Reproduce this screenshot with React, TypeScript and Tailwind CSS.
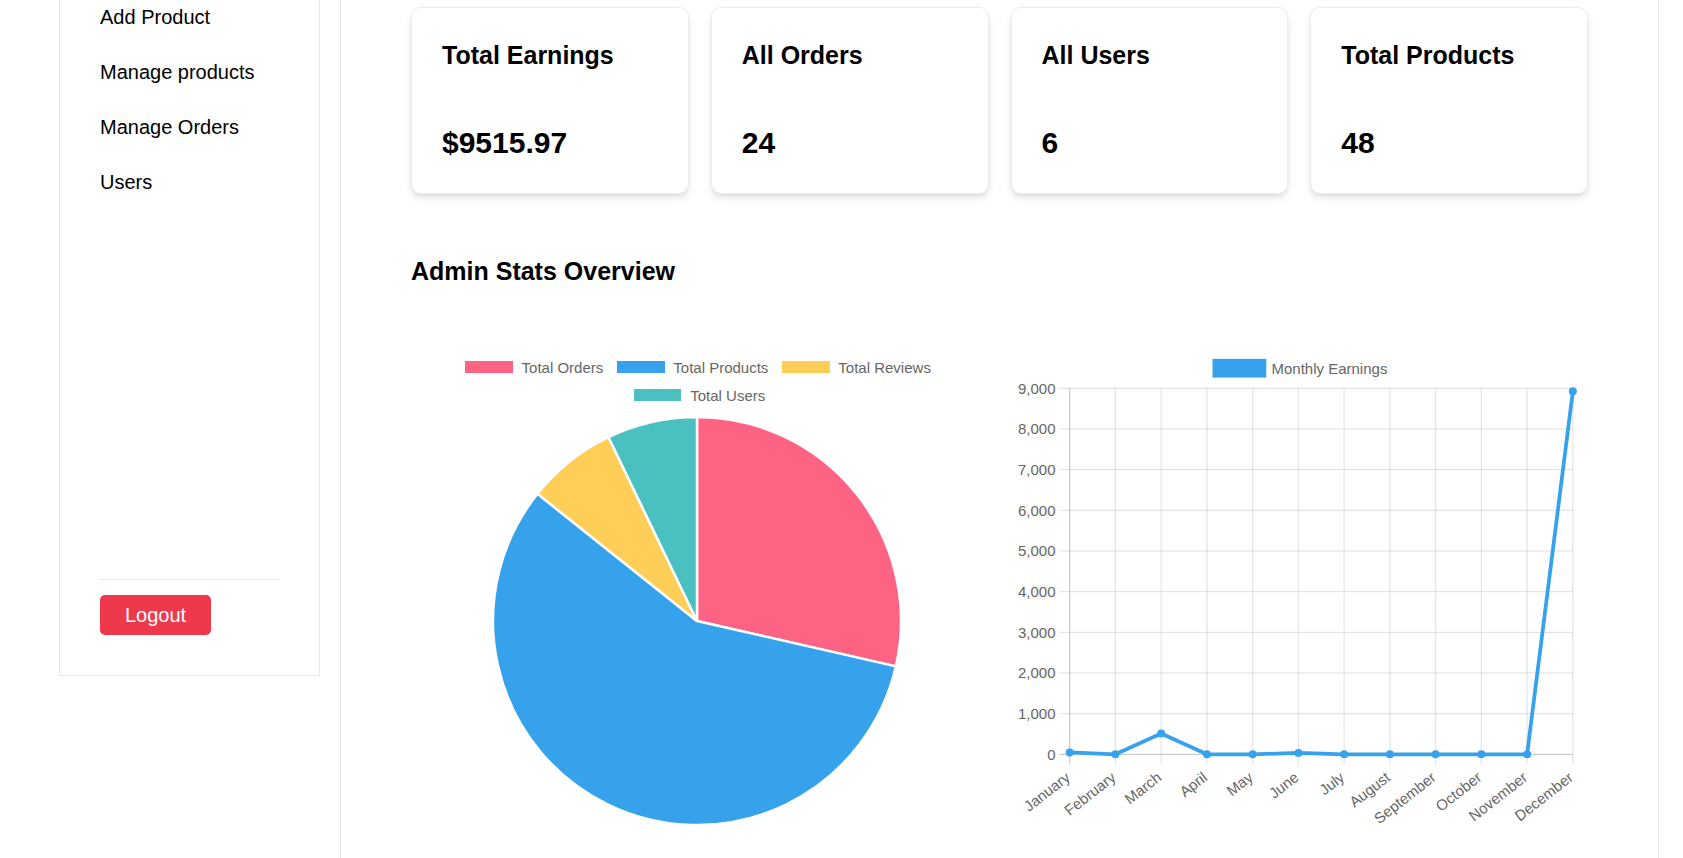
const navItems = ["Add Product", "Manage products", "Manage Orders", "Users"];

const stats = [
  { title: "Total Earnings", value: "$9515.97" },
  { title: "All Orders", value: "24" },
  { title: "All Users", value: "6" },
  { title: "Total Products", value: "48" },
];

const pieData = [
  { label: "Total Orders", value: 24, color: "#FF6384" },
  { label: "Total Products", value: 48, color: "#36A2EB" },
  { label: "Total Reviews", value: 6, color: "#FFCE56" },
  { label: "Total Users", value: 6, color: "#4BC0C0" },
];

const months = [
  "January", "February", "March", "April", "May", "June",
  "July", "August", "September", "October", "November", "December",
];
const earnings = [45, 0, 510, 0, 0, 35, 0, 0, 0, 0, 0, 8925.97];

const LegendItem = ({ label, color }: { label: string; color: string }) => (
  <div className="flex items-center">
    <span className="mx-[1.25px] h-[12.5px] w-[47.5px]" style={{ background: color }} />
    <span className="ml-[7.5px] text-[15px] leading-[15px] text-[#666]">{label}</span>
  </div>
);

const PieChart = () => {
  const total = pieData.reduce((s, d) => s + d.value, 0);
  const cx = 286;
  const cy = 206;
  const r = 204;
  let start = -Math.PI / 2;
  const slices = pieData.map((d) => {
    const end = start + (d.value / total) * Math.PI * 2;
    const x0 = cx + r * Math.cos(start);
    const y0 = cy + r * Math.sin(start);
    const x1 = cx + r * Math.cos(end);
    const y1 = cy + r * Math.sin(end);
    const large = end - start > Math.PI ? 1 : 0;
    const path = `M ${cx} ${cy} L ${x0} ${y0} A ${r} ${r} 0 ${large} 1 ${x1} ${y1} Z`;
    start = end;
    return { path, color: d.color };
  });

  return (
    <div className="flex flex-col">
      <div className="flex flex-col items-center gap-[13px] pt-[11.5px]">
        <div className="flex gap-[12.5px] pr-[3px]">
          {pieData.slice(0, 3).map((d) => (
            <LegendItem key={d.label} label={d.label} color={d.color} />
          ))}
        </div>
        <div className="flex gap-[12.5px]">
          <LegendItem label={pieData[3].label} color={pieData[3].color} />
        </div>
      </div>
      <svg width="576" height="430" className="mt-[12.5px]">
        {slices.map((s, i) => (
          <path key={i} d={s.path} fill={s.color} stroke="#fff" strokeWidth="2.5" />
        ))}
      </svg>
    </div>
  );
};

const LineChart = () => {
  const x0 = 57.7;
  const step = 45.74;
  const zeroY = 406.3;
  const per = 40.67 / 1000;
  const left = 47.5;
  const right = x0 + step * 11;
  const top = zeroY - 9000 * per;
  const pts = earnings.map((v, i) => [x0 + i * step, zeroY - v * per]);

  return (
    <svg width="576" height="500" className="block">
      <rect x="202.4" y="12.7" width="50" height="15" fill="#36A2EB" stroke="#36A2EB" strokeWidth="3.75" />
      <text x="259.5" y="20.2" fontSize="15" fill="#666" dominantBaseline="central">
        Monthly Earnings
      </text>

      {Array.from({ length: 10 }).map((_, i) => {
        const y = zeroY - i * 1000 * per;
        return (
          <g key={i}>
            <line
              x1={left}
              x2={right}
              y1={y}
              y2={y}
              stroke={i === 0 ? "rgba(0,0,0,0.2)" : "rgba(0,0,0,0.1)"}
              strokeWidth="1.25"
            />
            <text x="43.5" y={y} fontSize="15" fill="#666" textAnchor="end" dominantBaseline="central">
              {(i * 1000).toLocaleString("en-US")}
            </text>
          </g>
        );
      })}

      {months.map((m, i) => {
        const x = x0 + i * step;
        const tx = x - 2;
        const ty = 427;
        return (
          <g key={m}>
            <line
              x1={x}
              x2={x}
              y1={top}
              y2={zeroY + 10}
              stroke={i === 0 ? "rgba(0,0,0,0.2)" : "rgba(0,0,0,0.1)"}
              strokeWidth="1.25"
            />
            <text
              x={tx}
              y={ty}
              fontSize="15"
              fill="#666"
              textAnchor="end"
              dominantBaseline="central"
              transform={`rotate(-38 ${tx} ${ty})`}
            >
              {m}
            </text>
          </g>
        );
      })}

      <polyline
        points={pts.map((p) => p.join(",")).join(" ")}
        fill="none"
        stroke="#36A2EB"
        strokeWidth="3.75"
        strokeLinejoin="round"
      />
      {pts.map((p, i) => (
        <circle key={i} cx={p[0]} cy={p[1]} r="4" fill="#36A2EB" />
      ))}
    </svg>
  );
};

export default function App() {
  return (
    <div className="flex h-[858px] w-[1683px] overflow-hidden bg-white font-['Liberation_Sans',Arial,sans-serif] text-black">
      <aside className="w-[340px] shrink-0 pl-[59px]">
        <div className="flex h-[676px] w-[261px] flex-col border-x border-b border-[#e5e7eb] px-[40px] pb-[40px]">
          <ul className="flex flex-col gap-[25px] pt-[2px] text-[20px] leading-[30px]">
            {navItems.map((item) => (
              <li key={item}>
                <a href="#" className="text-black">{item}</a>
              </li>
            ))}
          </ul>
          <div className="mt-auto border-t border-[#e5e7eb] pt-[15px]">
            <button className="h-[40px] rounded-[5px] bg-[#ee394d] px-[25px] text-[20px] leading-[30px] text-white">
              Logout
            </button>
          </div>
        </div>
      </aside>

      <main className="w-[1319px] shrink-0 border-x border-[#e5e7eb] px-[70px] pt-[7px]">
        <div className="grid grid-cols-4 gap-[22px]">
          {stats.map((s) => (
            <div
              key={s.title}
              className="rounded-[10px] border border-[#ececec] bg-white p-[30px] shadow-[0_5px_8px_-1px_rgba(0,0,0,0.1),0_2px_5px_-2px_rgba(0,0,0,0.1)]"
            >
              <h2 className="text-[25px] font-bold leading-[35px]">{s.title}</h2>
              <p className="mt-[50px] text-[30px] font-bold leading-[40px]">{s.value}</p>
            </div>
          ))}
        </div>

        <h2 className="mt-[60px] text-[25px] font-bold leading-[35px]">Admin Stats Overview</h2>

        <div className="mt-[59px] grid grid-cols-2 gap-[25px]">
          <PieChart />
          <LineChart />
        </div>
      </main>
    </div>
  );
}
